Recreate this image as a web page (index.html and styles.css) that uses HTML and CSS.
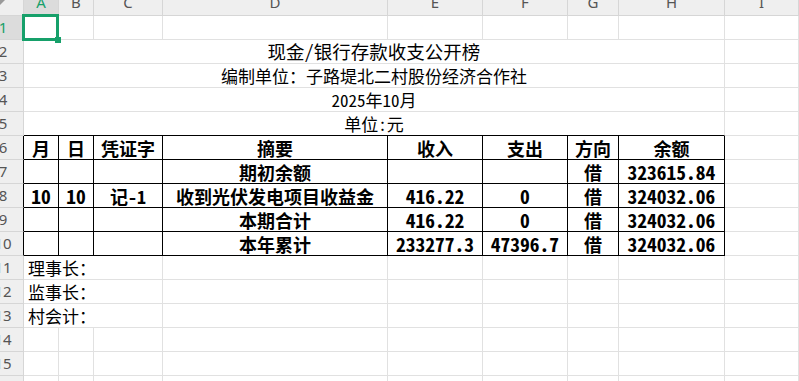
FILE: index.html
```html
<!DOCTYPE html>
<html lang="zh-CN">
<head>
<meta charset="utf-8">
<title>现金/银行存款收支公开榜</title>
<link rel="stylesheet" href="styles.css">
</head>
<body>
<div class="sheet">
  <div class="grid">
    <div class="corner"><span class="tri"></span></div>
    <div class="ch sel">A</div><div class="ch">B</div><div class="ch">C</div><div class="ch">D</div><div class="ch">E</div><div class="ch">F</div><div class="ch">G</div><div class="ch">H</div><div class="ch">I</div>

    <div class="rh sel"><span>1</span></div>
    <div class="c"></div><div class="c"></div><div class="c"></div><div class="c"></div><div class="c"></div><div class="c"></div><div class="c"></div><div class="c"></div><div class="c"></div>

    <div class="rh"><span>2</span></div>
    <div class="c m8 title">现金/银行存款收支公开榜</div><div class="c"></div>

    <div class="rh"><span>3</span></div>
    <div class="c m8 sub">编制单位：子路堤北二村股份经济合作社</div><div class="c"></div>

    <div class="rh"><span>4</span></div>
    <div class="c m8 sub">2025年10月</div><div class="c"></div>

    <div class="rh"><span>5</span></div>
    <div class="c m8 sub bb">单位:元</div><div class="c"></div>

    <div class="rh bl"><span>6</span></div>
    <div class="c t">月</div><div class="c t">日</div><div class="c t">凭证字</div><div class="c t">摘要</div><div class="c t">收入</div><div class="c t">支出</div><div class="c t">方向</div><div class="c t">余额</div><div class="c"></div>

    <div class="rh bl"><span>7</span></div>
    <div class="c t"></div><div class="c t"></div><div class="c t"></div><div class="c t">期初余额</div><div class="c t"></div><div class="c t"></div><div class="c t">借</div><div class="c t n">323615.84</div><div class="c"></div>

    <div class="rh bl"><span>8</span></div>
    <div class="c t n">10</div><div class="c t n">10</div><div class="c t">记-1</div><div class="c t">收到光伏发电项目收益金</div><div class="c t n">416.22</div><div class="c t n">0</div><div class="c t">借</div><div class="c t n">324032.06</div><div class="c"></div>

    <div class="rh bl"><span>9</span></div>
    <div class="c t"></div><div class="c t"></div><div class="c t"></div><div class="c t">本期合计</div><div class="c t n">416.22</div><div class="c t n">0</div><div class="c t">借</div><div class="c t n">324032.06</div><div class="c"></div>

    <div class="rh bl"><span>10</span></div>
    <div class="c t"></div><div class="c t"></div><div class="c t"></div><div class="c t">本年累计</div><div class="c t n">233277.3</div><div class="c t n">47396.7</div><div class="c t">借</div><div class="c t n">324032.06</div><div class="c"></div>

    <div class="rh"><span>11</span></div>
    <div class="c m3 sub">理事长：</div><div class="c"></div><div class="c"></div><div class="c"></div><div class="c"></div><div class="c"></div><div class="c"></div>

    <div class="rh"><span>12</span></div>
    <div class="c m3 sub">监事长：</div><div class="c"></div><div class="c"></div><div class="c"></div><div class="c"></div><div class="c"></div><div class="c"></div>

    <div class="rh"><span>13</span></div>
    <div class="c m3 sub">村会计：</div><div class="c"></div><div class="c"></div><div class="c"></div><div class="c"></div><div class="c"></div><div class="c"></div>

    <div class="rh"><span>14</span></div>
    <div class="c"></div><div class="c"></div><div class="c"></div><div class="c"></div><div class="c"></div><div class="c"></div><div class="c"></div><div class="c"></div><div class="c"></div>

    <div class="rh"><span>15</span></div>
    <div class="c"></div><div class="c"></div><div class="c"></div><div class="c"></div><div class="c"></div><div class="c"></div><div class="c"></div><div class="c"></div><div class="c"></div>

    <div class="rh"><span>16</span></div>
    <div class="c"></div><div class="c"></div><div class="c"></div><div class="c"></div><div class="c"></div><div class="c"></div><div class="c"></div><div class="c"></div><div class="c"></div>
  </div>
  <div class="selbox"><span class="handle"></span></div>
</div>
</body>
</html>
```

FILE: styles.css
```css
html, body {
  margin: 0;
  padding: 0;
  background: #ffffff;
  overflow: hidden;
}

.sheet {
  position: relative;
  width: 799px;
  height: 381px;
  overflow: hidden;
}

.grid {
  display: grid;
  grid-template-columns: 24px 35px 35px 69px 225px 95px 85px 51px 106px 1fr;
  grid-template-rows: 16px;
  grid-auto-rows: 24px;
  font-family: "Noto Sans Mono CJK SC", "Noto Sans CJK SC", sans-serif;
  color: #000000;
}

.grid > div {
  box-sizing: border-box;
  border-right: 1px solid #e1e1e1;
  border-bottom: 1px solid #e1e1e1;
  overflow: hidden;
  display: flex;
  align-items: center;
  white-space: nowrap;
  min-width: 0;
  line-height: 1;
}

.grid > .corner,
.grid > .ch,
.grid > .rh {
  background: #efefef;
  border-right-color: #d6d6d6;
  border-bottom-color: #d6d6d6;
  font-family: "Noto Sans", "Open Sans", sans-serif;
  font-size: 15px;
  color: #555555;
}

.grid > .corner {
  align-items: flex-start;
}

.tri {
  width: 0;
  height: 0;
  border-top: 5px solid #9a9a9a;
  border-right: 5px solid transparent;
}

.grid > .ch {
  justify-content: center;
  align-items: flex-start;
  line-height: 5px;
}

.grid > .rh {
  justify-content: center;
  padding-right: 17px;
}

.grid > .sel {
  background: #dcdcdc;
  color: #16a06a;
}

.grid > .bl {
  border-right-color: #000000;
}

.grid > .m8 {
  grid-column: span 8;
  justify-content: center;
}

.grid > .m3 {
  grid-column: span 3;
  padding-left: 4px;
}

.grid > .title {
  font-size: 18.5px;
}

.grid > .sub {
  font-size: 17px;
}

.grid > .bb {
  border-bottom-color: #000000;
}

.grid > .t {
  border-right-color: #000000;
  border-bottom-color: #000000;
  justify-content: center;
  font-weight: 700;
  font-size: 18px;
}

.grid > .n {
  font-size: 19.5px;
}

.selbox {
  position: absolute;
  left: 22px;
  top: 14px;
  width: 37px;
  height: 27px;
  box-sizing: border-box;
  border: 3px solid #16a06a;
}

.handle {
  position: absolute;
  right: -5px;
  bottom: -5px;
  width: 6px;
  height: 6px;
  background: #16a06a;
}
```
